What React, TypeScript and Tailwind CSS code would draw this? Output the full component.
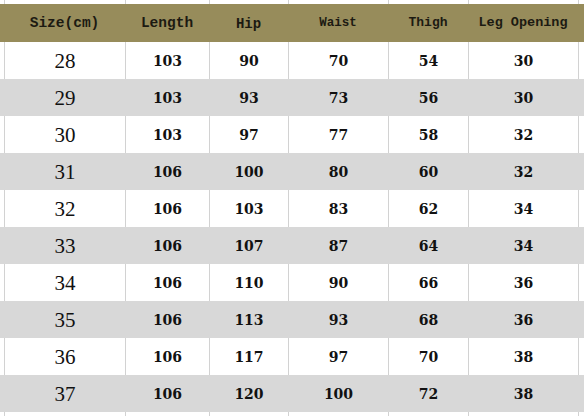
const rows: Array<[number, number, number, number, number, number]> = [
  [28, 103, 90, 70, 54, 30],
  [29, 103, 93, 73, 56, 30],
  [30, 103, 97, 77, 58, 32],
  [31, 106, 100, 80, 60, 32],
  [32, 106, 103, 83, 62, 34],
  [33, 106, 107, 87, 64, 34],
  [34, 106, 110, 90, 66, 36],
  [35, 106, 113, 93, 68, 36],
  [36, 106, 117, 97, 70, 38],
  [37, 106, 120, 100, 72, 38],
];

const cols = "grid grid-cols-[4px_121px_84px_79px_100px_80px_110px_6px]";

function LineStrip() {
  return (
    <div className={`${cols} h-[4px] bg-white`}>
      <div />
      {[0, 1, 2, 3, 4, 5, 6].map((i) => (
        <div key={i} className="border-l border-[#d2d2d2]" />
      ))}
    </div>
  );
}

export default function App() {
  return (
    <div className="w-[584px] h-[416px] overflow-hidden bg-white text-[#111]">
      <LineStrip />

      <div
        className={`${cols} h-[38px] bg-[#978c5b] items-center font-bold text-[#1c1a12]`}
        style={{ fontFamily: '"Liberation Mono", monospace' }}
      >
        <div />
        <div className="text-center text-[14.5px] mt-[2px]">Size(cm)</div>
        <div className="text-center text-[14.5px] mt-[2px]">Length</div>
        <div className="text-center text-[14px] mt-[2px]">Hip</div>
        <div className="text-center text-[12.5px]">Waist</div>
        <div className="text-center text-[13px]">Thigh</div>
        <div className="text-center text-[13.5px]">Leg Opening</div>
        <div />
      </div>

      {rows.map((row, i) => {
        const gray = i % 2 === 1;
        const line = gray ? "border-l border-[#d8d8d8]" : "border-l border-[#d2d2d2]";
        return (
          <div
            key={row[0]}
            className={`${cols} h-[37px] ${gray ? "bg-[#d8d8d8]" : "bg-white"}`}
          >
            <div />
            <div
              className={`${line} flex items-center justify-center pt-[2px] text-[21px]`}
              style={{ fontFamily: '"Liberation Serif", serif' }}
            >
              {row[0]}
            </div>
            {row.slice(1).map((v, j) => (
              <div
                key={j}
                className={`${line} flex items-center justify-center pt-[2px] text-[14px] font-bold`}
                style={{ fontFamily: '"DejaVu Serif", serif' }}
              >
                {v}
              </div>
            ))}
            <div className={line} />
          </div>
        );
      })}

      <LineStrip />
    </div>
  );
}
